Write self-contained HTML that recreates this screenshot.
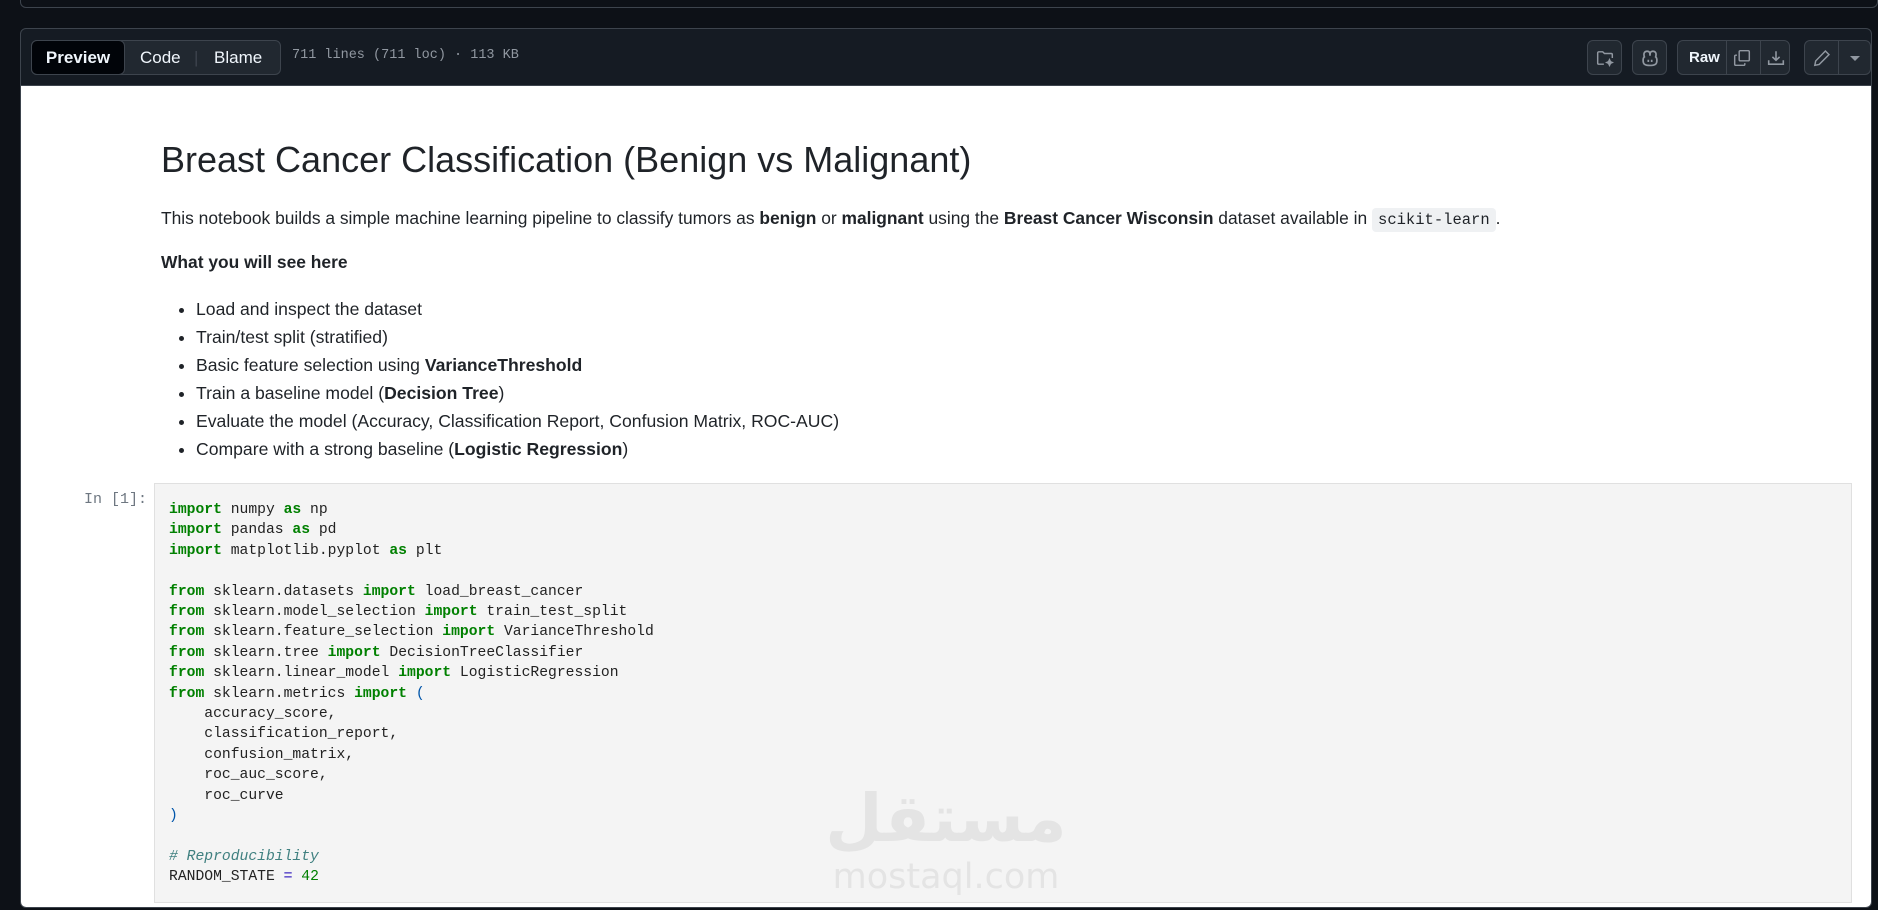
<!DOCTYPE html>
<html><head><meta charset="utf-8">
<style>
*{box-sizing:border-box;margin:0;padding:0}
html,body{width:1878px;height:910px;overflow:hidden;background:#0d1117;font-family:"Liberation Sans",sans-serif}
.topline{position:absolute;left:20px;right:0;top:0;height:8px;border:1px solid #3d444d;border-top:none;border-radius:0 0 6px 6px;background:#0d1117}
.box{position:absolute;left:20px;top:28px;width:1852px;height:880px;border:1px solid #3d444d;border-radius:6px;background:#151b23;overflow:hidden}
.hdr{height:57px;border-bottom:1px solid #3d444d;position:relative}
.seg{position:absolute;left:10px;top:11px;height:35px;width:250px;border:1px solid #3d444d;border-radius:6px;background:#212830;color:#f0f6fc;font-size:17px}
.seg span{position:absolute;top:0;height:33px;line-height:33px}
.seg .sel{left:-1px;width:94px;background:#010409;border:1px solid #3d444d;border-radius:6px;height:35px;top:-1px;text-align:center;font-weight:bold;line-height:33px}
.meta{position:absolute;left:271px;top:19px;color:#9198a1;font:13.5px "Liberation Mono",monospace}
.btn{position:absolute;top:11px;height:35px;border:1px solid #3d444d;border-radius:6px;background:#212830}
.btn svg{position:absolute}
.white{position:absolute;left:0;top:57px;width:1852px;height:823px;background:#fff}
.c{position:absolute;left:140px;color:#1f2328}
h1{position:absolute;left:140px;top:53px;font-size:36px;font-weight:normal;color:#1f2328;white-space:nowrap}
.p{font-size:17.4px;white-space:nowrap}
code{font:15.5px "Liberation Mono",monospace;background:#eff1f3;padding:3px 6px;border-radius:4px}
ul{position:absolute;left:175px;top:209px;font-size:17.6px;color:#1f2328;line-height:28px}
.cell{position:absolute;left:133px;top:397px;width:1698px;height:420px;background:#f4f4f4;border:1px solid #e0e0e0}
.pr{position:absolute;left:63px;top:405px;font:15px "Liberation Mono",monospace;color:#6e7781}
pre{position:absolute;left:148px;top:414px;font:14.7px/20.4px "Liberation Mono",monospace;color:#222}
.k{color:#008000;font-weight:bold}.o{color:#6a5acd;font-weight:bold}.cm{color:#408080;font-style:italic}.n{color:#008000}.pp{color:#0055aa}
.wm{position:absolute;left:800px;top:695px;width:250px;color:#e4e4e4;text-align:center;font-family:"DejaVu Sans",sans-serif;font-weight:bold}
</style></head><body>
<div class="topline"></div>
<div class="box">
 <div class="hdr">
  <div class="seg"><span class="sel">Preview</span><span style="left:108px">Code</span><span style="left:162px;color:#3d444d">|</span><span style="left:182px">Blame</span></div>
  <div class="meta">711 lines (711 loc) · 113 KB</div>
  <div class="btn" style="left:1566px;width:35px"><svg width="18" height="18" viewBox="0 0 16 16" style="left:8px;top:8px" fill="none" stroke="#9198a1" stroke-width="1.3"><path d="M7 13.5H2.5a1 1 0 0 1-1-1v-9a1 1 0 0 1 1-1h3.5l1.5 1.5h6a1 1 0 0 1 1 1V8"/><path d="M12 9.5l.8 1.7 1.7.8-1.7.8-.8 1.7-.8-1.7-1.7-.8 1.7-.8z" fill="#9198a1"/></svg></div>
  <div class="btn" style="left:1611px;width:35px"><svg width="20" height="18" viewBox="0 0 16 16" style="left:7px;top:8px" fill="none" stroke="#9198a1" stroke-width="1.5"><path d="M3 7c-1-3 0-5 2.5-5S8 4 8 6c0-2 0-4 2.5-4S14 4 13 7c1.5 1 1.5 5 0 6.5-2 1.5-8 1.5-10 0C1.5 12 1.5 8 3 7z"/><path d="M6.5 9.5v2M9.5 9.5v2"/></svg></div>
  <div class="btn" style="left:1656px;width:113px;color:#f0f6fc;font-weight:bold;font-size:15px">
   <span style="position:absolute;left:11px;top:8px">Raw</span>
   <div style="position:absolute;left:48px;top:0;width:1px;height:33px;background:#3d444d"></div>
   <svg width="18" height="18" viewBox="0 0 16 16" style="left:55px;top:8px" fill="none" stroke="#9198a1" stroke-width="1.3"><rect x="5.5" y="1.5" width="9" height="9" rx="1"/><path d="M3.5 5.5h-1a1 1 0 0 0-1 1v7a1 1 0 0 0 1 1h7a1 1 0 0 0 1-1v-1"/></svg>
   <div style="position:absolute;left:82px;top:0;width:1px;height:33px;background:#3d444d"></div>
   <svg width="18" height="18" viewBox="0 0 16 16" style="left:89px;top:8px" fill="none" stroke="#9198a1" stroke-width="1.4"><path d="M1.5 10v3.5h13V10M8 2v8M4.8 7L8 10l3.2-3"/></svg>
  </div>
  <div class="btn" style="left:1783px;width:67px">
   <svg width="18" height="18" viewBox="0 0 16 16" style="left:8px;top:8px" fill="none" stroke="#9198a1" stroke-width="1.3"><path d="M11 1.8l3.2 3.2-8.7 8.7-3.9.8.8-3.9z"/></svg>
   <div style="position:absolute;left:33px;top:0;width:1px;height:33px;background:#3d444d"></div>
   <div style="position:absolute;left:45px;top:15px;border-left:5px solid transparent;border-right:5px solid transparent;border-top:5px solid #9198a1"></div>
  </div>
 </div>
 <div class="white">
  <h1>Breast Cancer Classification (Benign vs Malignant)</h1>
  <div class="c p" style="top:122px">This notebook builds a simple machine learning pipeline to classify tumors as <b>benign</b> or <b>malignant</b> using the <b>Breast Cancer Wisconsin</b> dataset available in <code>scikit-learn</code>.</div>
  <div class="c p" style="top:166px"><b>What you will see here</b></div>
  <ul>
   <li>Load and inspect the dataset</li>
   <li>Train/test split (stratified)</li>
   <li>Basic feature selection using <b>VarianceThreshold</b></li>
   <li>Train a baseline model (<b>Decision Tree</b>)</li>
   <li>Evaluate the model (Accuracy, Classification Report, Confusion Matrix, ROC-AUC)</li>
   <li>Compare with a strong baseline (<b>Logistic Regression</b>)</li>
  </ul>
  <div class="pr">In [1]:</div>
  <div class="cell"></div>
<pre><span class="k">import</span> numpy <span class="k">as</span> np
<span class="k">import</span> pandas <span class="k">as</span> pd
<span class="k">import</span> matplotlib.pyplot <span class="k">as</span> plt

<span class="k">from</span> sklearn.datasets <span class="k">import</span> load_breast_cancer
<span class="k">from</span> sklearn.model_selection <span class="k">import</span> train_test_split
<span class="k">from</span> sklearn.feature_selection <span class="k">import</span> VarianceThreshold
<span class="k">from</span> sklearn.tree <span class="k">import</span> DecisionTreeClassifier
<span class="k">from</span> sklearn.linear_model <span class="k">import</span> LogisticRegression
<span class="k">from</span> sklearn.metrics <span class="k">import</span> <span class="pp">(</span>
    accuracy_score,
    classification_report,
    confusion_matrix,
    roc_auc_score,
    roc_curve
<span class="pp">)</span>

<span class="cm"># Reproducibility</span>
RANDOM_STATE <span class="o">=</span> <span class="n">42</span></pre>
  <div class="wm"><div style="font-size:66px;line-height:76px">مستقل</div><div style="font-size:35px;line-height:40px;font-weight:normal">mostaql.com</div></div>
 </div>
</div>
</body></html>
